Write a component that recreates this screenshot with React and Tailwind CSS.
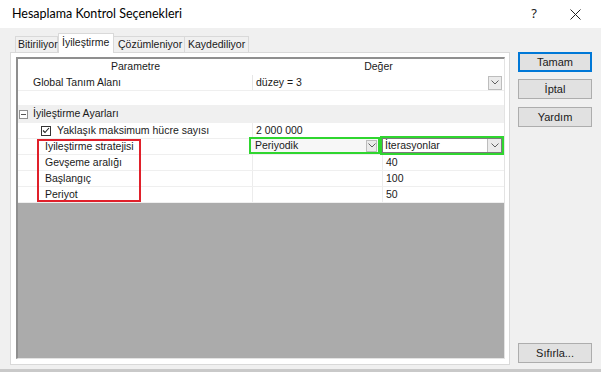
import React from "react";

const SANS = "font-['Liberation_Sans',Arial,sans-serif]";

function Chevron({ color = "#606060" }) {
  return (
    <svg width="8" height="5" viewBox="0 0 8 5">
      <path d="M0.5 0.5 L4 4 L7.5 0.5" fill="none" stroke={color} strokeWidth="1" />
    </svg>
  );
}

function DropBtn({ className = "" }) {
  return (
    <span className={`flex items-center justify-center border border-[#bdbdbd] bg-[#ebebeb] ${className}`}>
      <Chevron />
    </span>
  );
}

function Btn({ label, primary, className = "" }) {
  return (
    <div
      className={`flex h-[20px] w-[74px] items-center justify-center bg-[#e1e1e1] text-[11px] text-[#1a1a1a] ${
        primary ? "border-2 border-[#0078d7]" : "border border-[#adadad]"
      } ${className}`}
    >
      {label}
    </div>
  );
}

function Row({ name, value, indent = "pl-[27px]", split }) {
  return (
    <div className="flex h-[16px] border-b border-[#efefef]">
      <div className={`flex w-[235px] items-center border-r border-[#ececec] ${indent}`}>{name}</div>
      {split ? (
        <div className="flex flex-1">
          <div className="w-[130px] border-r border-[#ececec]" />
          <div className="flex items-center pl-[3px]">{value}</div>
        </div>
      ) : (
        <div className="flex flex-1 items-center pl-[3px]">{value}</div>
      )}
    </div>
  );
}

export default function App() {
  return (
    <div className={`flex h-[372px] w-[601px] flex-col bg-[#f0f0f0] text-[#1a1a1a] ${SANS}`}>
      {/* title bar */}
      <div className="flex h-[28px] shrink-0 items-center bg-white pl-[12px] pr-[20px]">
        <span className="font-['Lato',sans-serif] text-[12.5px] text-black">Hesaplama Kontrol Seçenekleri</span>
        <span className="ml-auto font-['Noto_Sans',sans-serif] text-[13px] text-[#222]">?</span>
        <svg className="ml-[33px]" width="11" height="11" viewBox="0 0 11 11">
          <path d="M0.5 0.5 L10.5 10.5 M10.5 0.5 L0.5 10.5" stroke="#222" strokeWidth="1" />
        </svg>
      </div>

      <div className="flex flex-1">
        {/* left: tabs + panel */}
        <div className="ml-[10px] flex w-[500px] flex-col pt-[5px]">
          <div className="flex h-[19px] items-end pl-[5px] text-[10.5px]">
            <div className="flex h-[16px] w-[43px] items-center border border-b-0 border-[#d9d9d9] bg-[#f0f0f0] pl-[2px]">Bitiriliyor</div>
            <div className="relative z-10 -mb-px flex h-[20px] w-[56px] items-center border border-b-0 border-[#d9d9d9] bg-white pb-[2px] pl-[3px]">İyileştirme</div>
            <div className="flex h-[16px] w-[71px] items-center border border-b-0 border-l-0 border-[#d9d9d9] bg-[#f0f0f0] pl-[4px]">Çözümleniyor</div>
            <div className="flex h-[16px] w-[64px] items-center border border-b-0 border-l-0 border-[#d9d9d9] bg-[#f0f0f0] pl-[3px]">Kaydediliyor</div>
          </div>

          <div className="h-[313px] border border-[#d9d9d9] bg-white px-[5px] pt-[4px]">
            <div className="flex h-[302px] w-[489px] flex-col border-b border-l-2 border-r border-t-2 border-b-[#e3e3e3] border-l-[#8f8f8f] border-r-[#e3e3e3] border-t-[#8f8f8f] bg-white text-[10.5px]">
              {/* header */}
              <div className="flex h-[16px] shrink-0">
                <div className="flex w-[235px] items-center justify-center">Parametre</div>
                <div className="flex flex-1 items-center justify-center">Değer</div>
              </div>
              {/* global */}
              <div className="flex h-[16px] shrink-0 border-b border-[#efefef]">
                <div className="flex w-[235px] items-center border-r border-[#e6e6e6] pl-[15px]">Global Tanım Alanı</div>
                <div className="flex flex-1 items-center pl-[3px] pr-[2px]">
                  düzey = 3
                  <DropBtn className="ml-auto h-[14px] w-[14px]" />
                </div>
              </div>
              <div className="h-[14px] shrink-0" />
              {/* section */}
              <div className="flex h-[18px] shrink-0 items-center bg-[#f0f0f0]">
                <span className="ml-[1px] flex h-[9px] w-[9px] items-center justify-center border border-[#919191] bg-white">
                  <span className="h-px w-[5px] bg-[#555]" />
                </span>
                <span className="ml-[5px]">İyileştirme Ayarları</span>
              </div>
              {/* rows */}
              <div className="flex h-[16px] shrink-0 border-b border-[#efefef]">
                <div className="flex w-[235px] items-center border-r border-[#ececec] pl-[23px]">
                  <span className="flex h-[10px] w-[10px] items-center justify-center border border-[#333]">
                    <svg width="8" height="7" viewBox="0 0 8 7">
                      <path d="M1 3.5 L3 5.5 L7 1" fill="none" stroke="#222" strokeWidth="1.1" />
                    </svg>
                  </span>
                  <span className="ml-[6px]">Yaklaşık maksimum hücre sayısı</span>
                </div>
                <div className="flex flex-1 items-center pl-[3px]">2 000 000</div>
              </div>

              <div className="relative shrink-0">
                <div className="flex h-[16px] border-b border-[#efefef]">
                  <div className="flex w-[235px] items-center pl-[27px]">İyileştirme stratejisi</div>
                  <div className="-ml-[4px] flex h-[17px] w-[131px] -translate-y-[2px] items-center border-2 border-[#2fd62f] bg-[#f7f7f7] pl-[4px] pr-[1px]">
                    Periyodik
                    <DropBtn className="ml-auto h-[12px] w-[11px]" />
                  </div>
                  <div className="flex h-[19px] w-[124px] -translate-y-[3px] items-center border-2 border-[#2fd62f] bg-white">
                    <div className="flex h-full flex-1 items-center border border-[#7a7a7a] pl-[2px]">
                      İterasyonlar
                      <DropBtn className="ml-auto h-full w-[14px] border-0 border-l" />
                    </div>
                  </div>
                </div>
                <Row name="Gevşeme aralığı" value="40" split />
                <Row name="Başlangıç" value="100" split />
                <Row name="Periyot" value="50" split />
                <div className="pointer-events-none absolute left-[19px] top-[0px] h-[63px] w-[104px] border-2 border-[#e0202a]" />
              </div>

              <div className="flex-1 bg-[#ababab]" />
            </div>
          </div>
        </div>

        {/* right: buttons */}
        <div className="ml-[8px] flex flex-col pt-[24px] pb-[6px]">
          <Btn label="Tamam" primary />
          <Btn label="İptal" className="mt-[7px]" />
          <Btn label="Yardım" className="mt-[8px]" />
          <Btn label="Sıfırla..." className="mt-auto" />
        </div>
      </div>
      <div className="h-[3px] shrink-0 bg-[#c9c9c9]" />
    </div>
  );
}
